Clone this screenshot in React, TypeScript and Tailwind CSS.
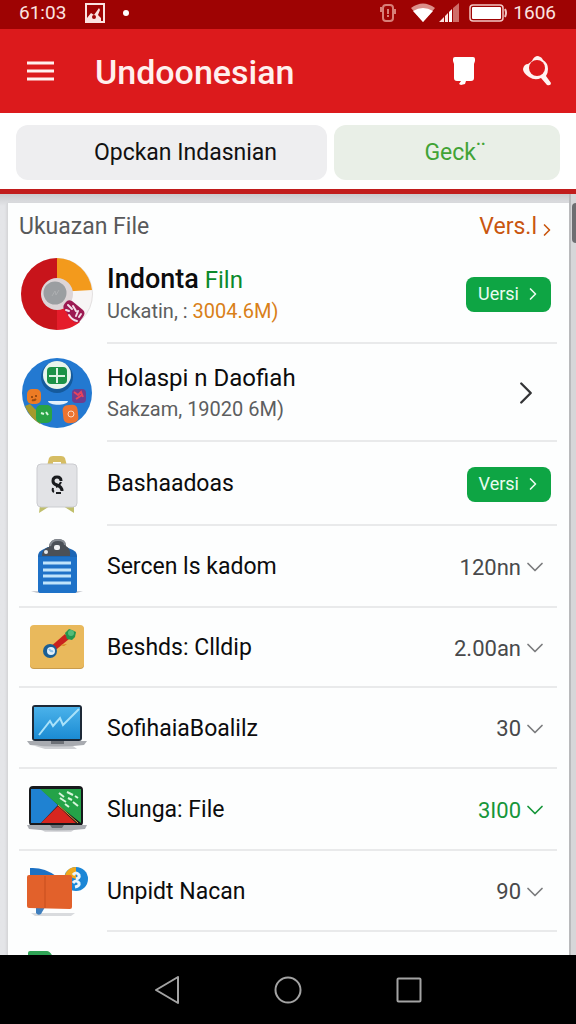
import type { ReactNode } from 'react'
import { ChevronDown, ChevronRight } from 'lucide-react'
import clsx from 'clsx'

function DiscIcon() {
  return (
    <svg width="72" height="74" viewBox="0 0 72 74" aria-hidden="true">
      <circle cx="36" cy="37" r="35.5" fill="#f7f5f5" stroke="#e3e0e0" />
      <path d="M36 1a36 36 0 0 0 0 72z" fill="#c8141b" />
      <path d="M36 1a36 36 0 0 1 35 32L36 35z" fill="#f39a1c" />
      <path d="M36 40v33c9 0 17-3 23-8L42 48z" fill="#e51c2b" />
      <circle cx="36" cy="37" r="16" fill="#ddd5d7" />
      <circle cx="34" cy="36" r="11.5" fill="#9b9ea1" />
      <path d="M31 39l3-5 1 4 3-5" fill="none" stroke="#adafb1" />
      <path d="M45 45q2-3 6-1l11 9q3 3 0 7l-3 4q-4 3-7 0l-9-12q-2-3 2-7z" fill="#9c1a52" />
      <path d="M47 48l4 4M52 49l3 5M57 54l-2 5M60 57l-2 3M45 53l3 1M48 58q3 5 8 6" fill="none" stroke="#f4dfe9" strokeWidth="2" strokeLinecap="round" />
    </svg>
  )
}

function AppsIcon() {
  return (
    <svg width="72" height="74" viewBox="0 0 72 74" aria-hidden="true">
      <circle cx="36" cy="37" r="35" fill="#2379d1" />
      <path d="M4 50l5-2 14 14-4 6A36 36 0 0 1 4 50z" fill="#a59a2d" />
      <circle cx="36" cy="21" r="16" fill="#155a9c" />
      <circle cx="36" cy="19" r="14" fill="#e9f5ec" />
      <rect x="26" y="11" width="20" height="17" rx="4" fill="#1c9247" />
      <path d="M36 12v15M28 20h16" stroke="#dff3e4" strokeWidth="2" />
      <rect x="6" y="33" width="14" height="15" rx="5" fill="#ec7b24" />
      <rect x="51" y="33" width="14" height="14" rx="4" fill="#6d3d8f" />
      <path d="M53 36l4 3 3-3 2 5M55 43l6-4" fill="none" stroke="#e8435b" strokeWidth="2" />
      <rect x="15" y="49" width="16" height="18" rx="5" fill="#2aa346" />
      <rect x="42" y="49" width="15" height="18" rx="5" fill="#ee7430" transform="rotate(-6 49 58)" />
      <path d="M27 45h20c-1 5-19 5-20 0z" fill="#e4f1fb" />
      <path d="M11 40v2M15 39v2M11 44q2 1 4-1" fill="none" stroke="#9a4c12" strokeWidth="2" />
      <path d="M20 57l3 1M25 56l2 3" stroke="#d9f5de" strokeWidth="2" />
      <circle cx="50" cy="58" r="3" fill="none" stroke="#f8d9c5" />
    </svg>
  )
}

function BadgeIcon() {
  return (
    <svg width="42" height="60" viewBox="0 0 42 60" aria-hidden="true">
      <path d="M11 12l2-8q1-2 4-2h8q3 0 4 2l2 8h-6V8h-8v4z" fill="#d6bd63" />
      <path d="M4 51l-1 8 11-7zM38 51v8l-11-7z" fill="#c0bf6b" />
      <rect x="1" y="10" width="40" height="43" rx="4" fill="#e2e3e6" stroke="#cbccd0" />
      <path d="M25 27q0-4-4-4t-4 4q0 3 4 4 5 2 5 6" fill="none" stroke="#191b1e" strokeWidth="3" />
      <path d="M25 28q-1 3-5 5M17 34q-1 3 1 4M20 39h5" fill="none" stroke="#191b1e" strokeWidth="2" />
    </svg>
  )
}

function ClipboardIcon() {
  return (
    <svg width="54" height="56" viewBox="0 0 54 56" aria-hidden="true">
      <path d="M1 53h52l-6 2H7z" fill="#c9ccd2" />
      <path d="M8 18q0-4 4-6l6-3h18l7 3q4 2 4 6v34q0 3-3 3H11q-3 0-3-3z" fill="#1c66b5" />
      <path d="M8 19h39v33q0 3-3 3H11q-3 0-3-3z" fill="#1e72c8" />
      <path d="M12 18q0-7 7-9 1-8 9-8 7 0 8 7 5 3 4 10z" fill="#4b5057" />
      <path d="M20 8q1-6 8-6t7 5" fill="none" stroke="#858a91" strokeWidth="2" />
      <rect x="24" y="7" width="6" height="5" rx="2" fill="#f1f2f4" />
      <circle cx="16" cy="14" r="2" fill="#e7e9ec" />
      <path d="M13 25h28M13 32h28M13 38h28M13 45h28" stroke="#bfe4fb" strokeWidth="3" />
    </svg>
  )
}

function PinCardIcon() {
  return (
    <svg width="56" height="44" viewBox="0 0 56 44" aria-hidden="true">
      <rect x="1" y="1" width="54" height="43" rx="4" fill="#c99b4b" />
      <rect x="1" y="0" width="54" height="43" rx="4" fill="#e9b95c" />
      <path d="M20 23L36 9l4 5-17 14z" fill="#c9211e" />
      <path d="M31 20l7-1-3 2z" fill="#d9831f" />
      <path d="M36 8l4-4 3 1 4 2-1 5-3 3-5-1z" fill="#23964f" />
      <circle cx="42" cy="8" r="3" fill="#54bb78" />
      <circle cx="21" cy="26" r="7" fill="#1b5f95" />
      <circle cx="22" cy="26" r="4" fill="#e2effa" />
      <path d="M20 24q2 3 4 2" fill="none" stroke="#8bc0ea" strokeWidth="2" />
    </svg>
  )
}

function ChartLaptopIcon() {
  return (
    <svg width="60" height="46" viewBox="0 0 60 46" aria-hidden="true">
      <defs>
        <linearGradient id="screen" x1="0" y1="0" x2="0" y2="1">
          <stop offset="0" stopColor="#4bb2ea" />
          <stop offset="1" stopColor="#1b8bd3" />
        </linearGradient>
      </defs>
      <path d="M8 41h38l4 3H18z" fill="#cfd1d4" />
      <rect x="5" y="0" width="50" height="36" rx="3" fill="#1d2937" />
      <rect x="7" y="2" width="46" height="32" fill="url(#screen)" />
      <path d="M12 30l11-14 3 5 7-8 3 7L52 4" fill="none" stroke="#a9e2fa" strokeWidth="2" />
      <path d="M0 36h60l-3 4q-27 3-54 0z" fill="#a8abb0" />
      <path d="M24 36h13v3H24z" fill="#6d7177" />
    </svg>
  )
}

function ColorLaptopIcon() {
  return (
    <svg width="60" height="46" viewBox="0 0 60 46" aria-hidden="true">
      <path d="M12 42h38l-6 4H18z" fill="#d9dadd" />
      <rect x="2" y="0" width="54" height="40" rx="4" fill="#17191c" />
      <path d="M4 3h10l17 16-17 18H4z" fill="#1f82d2" />
      <path d="M13 3h41v34L31 19z" fill="#24a348" />
      <path d="M31 20l18 17H14z" fill="#d7261f" />
      <path d="M31 19l20 18" stroke="#e3a13a" />
      <path d="M32 7l5 4M40 6l6 3M48 10l3 2M33 12l6 4M41 12l4 2M46 16l5 4M38 18l4 3" stroke="#d8f6dc" strokeWidth="2" />
      <path d="M0 39h60l-2 4q-28 3-56 0z" fill="#a9acb1" />
      <path d="M23 39h14l-2 3H25z" fill="#6b6f75" />
    </svg>
  )
}

function FolderIcon() {
  return (
    <svg width="62" height="50" viewBox="0 0 62 50" aria-hidden="true">
      <path d="M5 46h44l-4 3H9z" fill="#d9dbde" />
      <path d="M4 1q14-1 26 8H4z" fill="#1c71c4" />
      <path d="M10 40h9l-4 7q-3 2-5-1z" fill="#3f7fbe" />
      <circle cx="50" cy="12" r="12" fill="#1b86d6" />
      <path d="M39 8A12 12 0 0 1 50 0v12z" fill="#f0a81d" />
      <path d="M47 8q3-4 6 0 1 3-3 4M47 16q3-4 6 0 1 3-4 4" fill="none" stroke="#eaf4fc" strokeWidth="3" />
      <path d="M1 10q0-2 2-2h41q2 0 2 2v30q0 2-2 2L3 41q-2 0-2-2z" fill="#e2612b" />
      <path d="M19 9v32" stroke="#c64f1f" />
    </svg>
  )
}

function SheetIcon() {
  return (
    <svg width="60" height="30" viewBox="0 0 60 30" aria-hidden="true">
      <path d="M24 5h36v25H24z" fill="#a8ad52" />
      <path d="M1 2q0-2 2-2h17q3 0 6 6h2v24H1z" fill="#30a456" />
    </svg>
  )
}

type Row = {
  title: ReactNode
  sub?: ReactNode
  icon: ReactNode
  height: string
  action?: string
  value?: string
  green?: boolean
  inset?: boolean
}

const ROWS: Row[] = [
  {
    title: (
      <>
        <span className="text-[27px] leading-8 font-medium">Indonta</span> <span className="text-[#0b8a2c]">Filn</span>
      </>
    ),
    sub: (
      <>
        Uckatin, : <span className="text-[#d98019]">3004.6M)</span>
      </>
    ),
    icon: <DiscIcon />,
    height: 'h-[100px]',
    action: 'Uersi',
    inset: true,
  },
  { title: 'Holaspi n Daofiah', sub: 'Sakzam, 19020 6M)', icon: <AppsIcon />, height: 'h-[98px]', inset: true },
  { title: 'Bashaadoas', icon: <BadgeIcon />, height: 'h-[84px]', action: 'Versi', inset: true },
  { title: 'Sercen ls kadom', icon: <ClipboardIcon />, height: 'h-[82px]', value: '120nn' },
  { title: 'Beshds: Clldip', icon: <PinCardIcon />, height: 'h-[80px]', value: '2.00an' },
  { title: 'SofihaiaBoalilz', icon: <ChartLaptopIcon />, height: 'h-[81px]', value: '30' },
  { title: 'Slunga: File', icon: <ColorLaptopIcon />, height: 'h-[82px]', value: '3I00', green: true },
  { title: 'Unpidt Nacan', icon: <FolderIcon />, height: 'h-[81px]', value: '90', inset: true },
  { title: 'Sahandar', icon: <SheetIcon />, height: 'h-[67px]', inset: true },
]

function RowAction({ row }: { row: Row }) {
  if (row.action) {
    return (
      <button className="mr-[6px] flex h-[35px] items-center gap-1 rounded-lg bg-[#0ea544] pr-2 pl-3 text-lg text-[#e9fbef]">
        {row.action}
        <ChevronRight size={20} strokeWidth={2} />
      </button>
    )
  }
  if (row.value) {
    return (
      <button
        className={clsx('mr-2 flex items-center text-[22px]', row.green ? 'text-[#16963a]' : 'text-[#48494b]')}
      >
        {row.value}
        <ChevronDown size={28} strokeWidth={1.5} className={row.green ? 'text-[#16963a]' : 'text-[#7b7c7e]'} />
      </button>
    )
  }
  if (row.sub) {
    return (
      <button className="mr-3 text-[#333436]" aria-label="Open">
        <ChevronRight size={38} strokeWidth={1.5} />
      </button>
    )
  }
  return null
}

function ListRow({ row }: { row: Row }) {
  return (
    <li className={clsx('flex shrink-0', row.height, !row.inset && 'border-b-2 border-[#e9eaeb]')}>
      <div className="flex w-[76px] shrink-0 items-center justify-center">{row.icon}</div>
      <div
        className={clsx(
          'ml-3 flex min-w-0 flex-1 items-center justify-between pt-[2px]',
          row.inset && 'border-b-2 border-[#e9eaeb]',
        )}
      >
        <div className="whitespace-nowrap">
          <h3 className={clsx('leading-8 text-[#0c0c0d]', row.sub ? 'text-2xl leading-8' : 'text-[23px]')}>
            {row.title}
          </h3>
          {row.sub && <p className="text-xl leading-[30px] text-[#5d5e60]">{row.sub}</p>}
        </div>
        <RowAction row={row} />
      </div>
    </li>
  )
}

function StatusBar() {
  return (
    <div className="flex h-[29px] shrink-0 items-center bg-[#9e0303] pr-5 pb-[3px] pl-[19px] text-[19px] leading-6 text-[#fbe3e0]">
      <span>61:03</span>
      <svg width="20" height="20" viewBox="0 0 20 20" className="ml-[19px]" aria-hidden="true">
        <rect x="1" y="1" width="18" height="18" fill="none" stroke="#fbe3e0" strokeWidth="2" />
        <path d="M2 18v-3l4-5 3 2 5-7 1 2-2 5 3 3v3z" fill="#fbe3e0" />
        <circle cx="9" cy="14" r="2" fill="#9e0303" />
      </svg>
      <span className="ml-[18px] size-[6px] rounded-full bg-white" />
      <div className="ml-auto flex items-center">
        <svg width="18" height="20" viewBox="0 0 18 20" aria-hidden="true">
          <rect x="4" y="2" width="10" height="16" rx="3" fill="none" stroke="#d87f78" strokeWidth="2" />
          <path d="M2 4v5M16 6v5M9 6v5M9 12v2" stroke="#d87f78" strokeWidth="2" />
        </svg>
        <svg width="24" height="20" viewBox="0 0 24 20" className="ml-[14px]" aria-hidden="true">
          <path d="M0 5q12-9 24 0L12 19z" fill="#dc8f8a" />
          <path d="M2 8q10-6 20 0L12 19z" fill="#fff" />
        </svg>
        <svg width="20" height="20" viewBox="0 0 20 20" className="ml-1" aria-hidden="true">
          <path d="M0 19l5-5v5zM6 13l3-3v9H6z" fill="#fbe3e0" />
          <path d="M10 9l3-3v13h-3z" fill="#fff" />
          <path d="M14 5l6-5v19h-6z" fill="#cf6d68" />
        </svg>
        <svg width="38" height="18" viewBox="0 0 38 18" className="ml-[10px]" aria-hidden="true">
          <rect x="1" y="1" width="33" height="16" rx="3" fill="none" stroke="#f3c7c4" strokeWidth="1.5" />
          <rect x="3" y="3" width="29" height="12" rx="1" fill="#fff" />
          <path d="M36 5q2 4 0 8" fill="none" stroke="#f3c7c4" strokeWidth="2" />
        </svg>
        <span className="ml-[6px]">1606</span>
      </div>
    </div>
  )
}

function AppHeader() {
  return (
    <header className="flex h-[84px] shrink-0 items-center bg-[#dc1a1c] pr-[25px] pl-[27px] text-[#fff0ee]">
      <button aria-label="Menu">
        <svg width="27" height="20" viewBox="0 0 27 20" aria-hidden="true">
          <path d="M0 2h27M0 10h27M0 18h27" stroke="#fff0ee" strokeWidth="3" />
        </svg>
      </button>
      <h1 className="ml-[41px] pt-[2px] text-[34px] leading-10 font-medium">Undoonesian</h1>
      <button className="ml-auto" aria-label="Bin">
        <svg width="22" height="30" viewBox="0 0 22 30" aria-hidden="true">
          <path d="M0 3q0-2 2-2h18q2 0 2 2v2l-1 3v14q0 3-3 3h-5l-1 3-4 1-2-1 2-3H4q-3 0-3-3V8L0 5z" fill="#fff" />
        </svg>
      </button>
      <button className="ml-12" aria-label="Search">
        <svg width="28" height="30" viewBox="0 0 28 30" aria-hidden="true">
          <path d="M9 5q2-5 6-5 4 1 5 4 5 3 5 9 0 4-2 7l5 7q0 3-4 2l-6-7q-6 3-12-1-6-4-6-8 1-5 5-5z" fill="#fff3f1" />
          <circle cx="14" cy="12" r="8" fill="#dc1a1c" />
        </svg>
      </button>
    </header>
  )
}

function NavBar() {
  return (
    <nav className="flex h-[69px] shrink-0 items-center justify-center gap-[94px] bg-black text-[#a3a3a3]">
      <button aria-label="Back">
        <svg width="26" height="28" viewBox="0 0 26 28" fill="none" stroke="currentColor" strokeWidth="2" strokeLinejoin="round">
          <path d="M24 1v26L2 14z" />
        </svg>
      </button>
      <button aria-label="Home">
        <svg width="28" height="28" viewBox="0 0 28 28" fill="none" stroke="currentColor" strokeWidth="2">
          <circle cx="14" cy="14" r="12.5" />
        </svg>
      </button>
      <button aria-label="Recent apps">
        <svg width="26" height="26" viewBox="0 0 26 26" fill="none" stroke="currentColor" strokeWidth="2">
          <rect x="1.5" y="1.5" width="23" height="23" rx="1" />
        </svg>
      </button>
    </nav>
  )
}

export default function App() {
  return (
    <div className="flex h-screen flex-col overflow-hidden bg-white font-['Roboto',sans-serif]">
      <StatusBar />
      <AppHeader />
      <div className="grid shrink-0 grid-cols-[311fr_226fr] gap-[7px] border-b-[5px] border-[#c11c1c] px-4 pt-3 pb-[9px] text-[23px]">
        <button className="h-[55px] rounded-xl bg-[#eeeef0] pt-[2px] pl-7 text-[#111112]">Opckan Indasnian</button>
        <button className="h-[55px] rounded-xl bg-[#e9efe7] pt-[2px] pl-4 text-[#41a336]">Geck¨</button>
      </div>
      <div className="flex min-h-0 flex-1 bg-linear-to-b from-[#c9cacd] to-[#e4e5e8] to-[12px] pl-[7px]">
        <main className="mt-[9px] flex min-w-0 flex-1 flex-col overflow-hidden border-l border-[#d6d7d9] bg-[#fdfefe] pr-3 pl-[11px] shadow">
          <div className="flex h-[41px] shrink-0 items-center justify-between pt-2 text-[23px]">
            <h2 className="text-[#58595b]">Ukuazan File</h2>
            <a href="#versi" className="flex items-center text-[#c9560f]">
              Vers.l
              <ChevronRight size={20} strokeWidth={2} className="mt-1" />
            </a>
          </div>
          <ul className="flex flex-col">
            {ROWS.map((row, i) => (
              <ListRow key={i} row={row} />
            ))}
          </ul>
        </main>
        {/* scrollbar track */}
        <div className="flex w-[7px] shrink-0 flex-col items-end border-l-2 border-[#b9babc] bg-[#d6d7d9] pt-[9px]">
          <div className="h-10 w-1 rounded-l bg-[#6d6e71]" />
        </div>
      </div>
      <NavBar />
    </div>
  )
}
